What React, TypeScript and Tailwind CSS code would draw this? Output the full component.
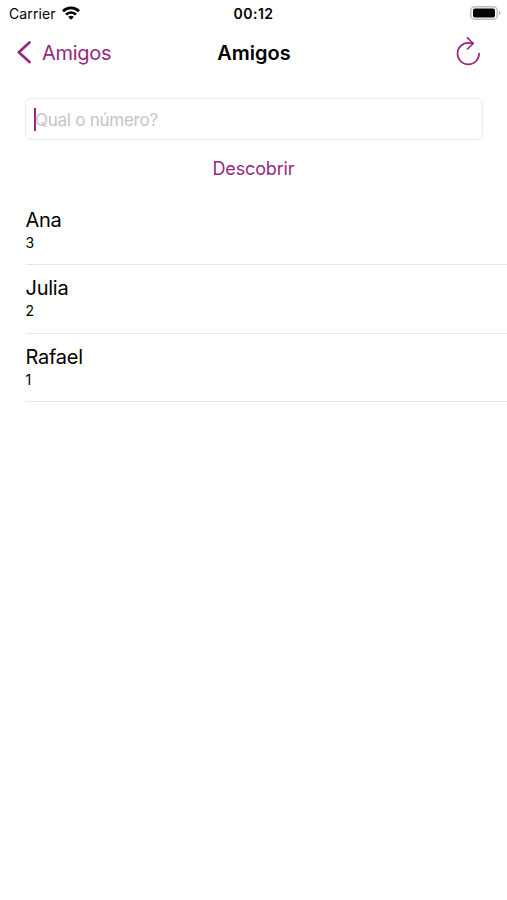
const friends = [
  { name: 'Ana', count: 3 },
  { name: 'Julia', count: 2 },
  { name: 'Rafael', count: 1 },
];

function StatusBar() {
  return (
    <div className="grid h-[26px] grid-cols-3 items-center px-[9px]">
      <div className="flex items-center gap-[6px]">
        <span className="text-[14px] tracking-[0.1px]">Carrier</span>
        <svg width="18" height="14" viewBox="0 0 18 14" fill="none" stroke="black" strokeWidth="2.7">
          <path d="M1 5.2a11.3 11.3 0 0 1 16 0" />
          <path d="M4 8.6a7 7 0 0 1 10 0" />
          <path d="M9 13.8 6.2 11a3.8 3.8 0 0 1 5.6 0z" fill="black" stroke="none" />
        </svg>
      </div>
      <span className="text-center text-[14px] font-semibold tracking-[0.5px]">00:12</span>
      <svg className="-mr-[3px] justify-self-end" width="31" height="14" viewBox="0 0 31 14">
        <rect x="0.75" y="0.75" width="26.5" height="12.5" rx="4" fill="none" stroke="#bcbcbc" strokeWidth="1.5" />
        <rect x="3" y="2.5" width="22" height="9" rx="2" />
        <path d="M29 5v4q1.5-.5 1.5-2T29 5" fill="#a6a6a6" />
      </svg>
    </div>
  );
}

export default function App() {
  return (
    <div className="h-[900px] w-[507px] overflow-hidden bg-white font-['Inter',sans-serif] text-black">
      <StatusBar />

      {/* Navigation bar */}
      <header className="grid h-[52px] grid-cols-3 items-center pl-4 pr-[15px] pt-[2px] text-[#932980]">
        <button className="flex items-center gap-[10px] text-[20px] tracking-[-0.3px]">
          <svg width="16" height="24" viewBox="0 0 16 24" fill="none" stroke="currentColor" strokeWidth="2.7" strokeLinecap="round" strokeLinejoin="round">
            <path d="M13.5 1.5 2.800 11.300l10.700 9.800" />
          </svg>
          Amigos
        </button>
        <h1 className="text-center text-[20px] font-semibold text-black">Amigos</h1>
        <button className="mr-[11px] justify-self-end" aria-label="Atualizar">
          <svg width="26" height="32" viewBox="0 0 26 32" fill="none" stroke="currentColor" strokeWidth="1.7" strokeLinecap="round" strokeLinejoin="round">
            <path d="M24.1 16.6A10.8 10.8 0 1 1 13.3 5.8q2.500 0 4.800.6" />
            <path d="m12.500.9 5.700 5.600-5.700 5.500" />
          </svg>
        </button>
      </header>

      <form className="mx-[25px] mt-5 flex flex-col" onSubmit={(e) => e.preventDefault()}>
        <div className="flex h-[42px] w-[458px] items-center rounded-[6px] border border-[#ebebeb] pl-2">
          <span className="h-[23px] w-[2px] bg-[#932980]" />
          <span className="-ml-px pt-[3px] text-[17px] tracking-[-0.25px] text-[#c5c5c7]">Qual o número?</span>
        </div>
        <button className="mt-[17px] self-center text-[18px] leading-6 tracking-[-0.15px] text-[#932980]">Descobrir</button>
      </form>

      <ul className="mt-4 pl-[26px]">
        {friends.map((friend) => (
          <li key={friend.name} className="flex h-[68.4px] flex-col border-b border-[#e6e6e6] pt-[11px]">
            <span className="-ml-[0.5px] text-[20px] leading-[24px] tracking-[-0.25px]">{friend.name}</span>
            <span className="-ml-[0.5px] text-[14px] leading-[22px]">{friend.count}</span>
          </li>
        ))}
      </ul>
    </div>
  );
}
